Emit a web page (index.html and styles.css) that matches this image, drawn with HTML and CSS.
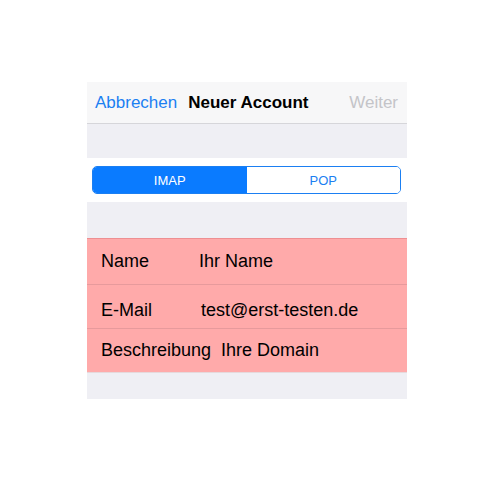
FILE: index.html
```html
<!DOCTYPE html>
<html lang="de">
<head>
    <meta charset="UTF-8">
    <meta name="viewport" content="width=device-width, initial-scale=1.0">
    <title>Neuer Account</title>
    <link rel="stylesheet" href="styles.css">
</head>
<body>
    <div class="screen">
        <header class="nav-bar">
            <a href="#" class="nav-btn">Abbrechen</a>
            <span class="nav-title">Neuer Account</span>
            <a href="#" class="nav-btn nav-btn-disabled">Weiter</a>
        </header>

        <div class="spacer spacer-top"></div>

        <div class="segment-band">
            <div class="segmented">
                <button class="segment active">IMAP</button>
                <button class="segment">POP</button>
            </div>
        </div>

        <div class="spacer spacer-mid"></div>

        <div class="form-group">
            <div class="form-row row-name">
                <span class="form-label">Name</span>
                <span class="form-value">Ihr Name</span>
            </div>
            <div class="form-row row-mail">
                <span class="form-label">E-Mail</span>
                <span class="form-value value-mail">test@erst-testen.de</span>
            </div>
            <div class="form-row row-desc">
                <span class="form-label">Beschreibung</span>
                <span class="form-value">Ihre Domain</span>
            </div>
        </div>

        <div class="spacer spacer-bottom"></div>
    </div>
</body>
</html>
```

FILE: styles.css
```css
* {
    margin: 0;
    padding: 0;
    box-sizing: border-box;
    font-family: "Liberation Sans", Arial, Helvetica, sans-serif;
}

body {
    background: #fff;
    color: #000;
}

.screen {
    width: 320px;
    margin: 82px 0 0 87px;
}

.nav-bar {
    height: 42px;
    background: #f7f7f8;
    border-bottom: 1px solid #d6d6da;
    display: flex;
    align-items: center;
    gap: 11px;
    padding: 0 9px 0 8px;
    font-size: 17px;
}

.nav-btn {
    color: #1b7ff2;
    text-decoration: none;
}

.nav-btn-disabled {
    color: #c4c4c8;
    margin-left: auto;
}

.nav-title {
    font-weight: 700;
}

.spacer {
    background: #efeff4;
}

.spacer-top {
    height: 34px;
}

.spacer-mid {
    height: 36px;
}

.spacer-bottom {
    height: 27px;
    border-top: 1px solid #e6d9dc;
}

.segment-band {
    background: #fff;
    height: 44px;
    padding: 8px 6px 8px 5px;
}

.segmented {
    display: flex;
    height: 28px;
    border: 1px solid #1b7ff2;
    border-radius: 5px;
    overflow: hidden;
}

.segment {
    flex: 1;
    border: none;
    background: #fff;
    color: #1b7ff2;
    font-size: 13px;
}

.segment.active {
    background: #0a7bff;
    color: #fff;
}

.form-group {
    background: #ffaaaa;
    border-top: 1px solid #ee8f92;
}

.form-row {
    display: flex;
    align-items: center;
    gap: 10px;
    padding-left: 14px;
    font-size: 18px;
    border-bottom: 1px solid #e79a9c;
}

.row-name {
    height: 46px;
}

.row-mail {
    height: 44px;
    padding-top: 8px;
}

.row-desc {
    height: 43px;
    border-bottom: none;
}

.form-label {
    min-width: 88px;
}

.value-mail {
    margin-left: 2px;
}
```
